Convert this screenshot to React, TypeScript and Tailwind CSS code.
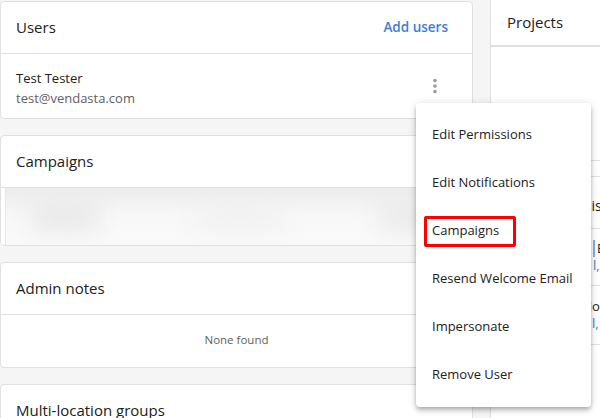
import { ReactNode } from "react";

const font = { fontFamily: '"Open Sans", "Noto Sans", Arial, sans-serif' };

function Card({ children, className = "" }: { children: ReactNode; className?: string }) {
  return (
    <div className={`shrink-0 bg-white border border-[#e0e0e0] rounded-[4px] overflow-hidden ${className}`}>
      {children}
    </div>
  );
}

function CardHeader({ title, action }: { title: string; action?: ReactNode }) {
  return (
    <div className="h-[52px] shrink-0 flex items-center justify-between pl-[15px] pr-6 border-b border-[#e0e0e0]">
      <span className="text-[15px] text-[#212121]">{title}</span>
      {action}
    </div>
  );
}

const menuItems = [
  "Edit Permissions",
  "Edit Notifications",
  "Campaigns",
  "Resend Welcome Email",
  "Impersonate",
  "Remove User",
];

export default function App() {
  return (
    <div style={font} className="relative w-[600px] h-[418px] overflow-hidden bg-[#f5f5f5] flex">
      {/* left column */}
      <div className="w-[473px] shrink-0 flex flex-col gap-4 pt-px">
        <Card>
          <CardHeader
            title="Users"
            action={<button className="text-[13.5px] font-semibold text-[#3b7dd8]">Add users</button>}
          />
          <div className="h-[64px] flex items-center justify-between pl-[15px] pr-[26px]">
            <div className="flex flex-col leading-[20px] pt-[3px]">
              <span className="text-[13px] text-[#212121]">Test Tester</span>
              <span className="text-[13px] text-[#616161]">test@vendasta.com</span>
            </div>
            <svg width="22" height="22" viewBox="0 0 24 24" fill="#9e9e9e">
              <path d="M12 8c1.1 0 2-.9 2-2s-.9-2-2-2-2 .9-2 2 .9 2 2 2zm0 2c-1.1 0-2 .9-2 2s.9 2 2 2 2-.9 2-2-.9-2-2-2zm0 6c-1.1 0-2 .9-2 2s.9 2 2 2 2-.9 2-2-.9-2-2-2z" />
            </svg>
          </div>
        </Card>

        <Card>
          <CardHeader title="Campaigns" />
          <div className="h-[57px] flex">
            <div className="w-[5px] bg-white border-r border-[#e6e6e6]" />
            <div className="flex-1 bg-gradient-to-b from-[#ececec] via-[#f8f8f8] to-[#fafafa] flex items-center justify-between px-6 overflow-hidden">
              <div className="w-[70px] h-[26px] rounded-full bg-[#e6e6e6] blur-md" />
              <div className="w-[90px] h-[26px] rounded-full bg-[#f0f0f0] blur-md" />
              <div className="w-[70px] h-[26px] rounded-full bg-[#e8e8e8] blur-md" />
            </div>
          </div>
        </Card>

        <Card>
          <CardHeader title="Admin notes" />
          <div className="h-[52px] flex items-center justify-center pb-[3px]">
            <span className="text-[11.5px] text-[#616161]">None found</span>
          </div>
        </Card>

        <Card>
          <CardHeader title="Multi-location groups" />
        </Card>
      </div>

      {/* right column */}
      <div className="ml-[17px] flex-1 bg-white border-l border-[#e0e0e0] flex flex-col whitespace-nowrap">
        <div className="h-[47px] shrink-0 flex items-center px-4 border-b-2 border-[#e0e0e0]">
          <span className="text-[15px] text-[#212121]">Projects</span>
        </div>
        <div className="h-[114px] shrink-0 border-b border-[#e0e0e0]" />
        <div className="h-[16px] shrink-0 border-b border-[#e0e0e0]" />
        <div className="h-[52px] shrink-0 border-b border-[#e0e0e0] flex items-center pt-[6px] pl-[58px] text-[14px] text-[#212121]">
          Analysis
        </div>
        <div className="h-[57px] shrink-0 border-b border-[#e0e0e0] flex flex-col justify-center pl-[102px] leading-[17px]">
          <span className="text-[13px] text-[#212121] border-l-2 border-[#7fb0e8] pl-[2px]">E</span>
          <span className="text-[13px] text-[#3b7dd8]">l,</span>
        </div>
        <div className="h-[59px] shrink-0 border-b border-[#e0e0e0] flex flex-col justify-center pl-[70px] leading-[17px]">
          <span className="text-[13px] text-[#212121]">Vendor</span>
          <span className="text-[13px] text-[#3b7dd8] pl-[31px]">l,</span>
        </div>
      </div>

      {/* context menu */}
      <div className="absolute left-[416px] top-[103px] w-[175px] bg-white rounded-[4px] py-2 shadow-[0_2px_4px_-1px_rgba(0,0,0,0.2),0_4px_5px_0_rgba(0,0,0,0.14),0_1px_10px_0_rgba(0,0,0,0.12)]">
        {menuItems.map((item) => (
          <div key={item} className="relative h-12 flex items-center px-4 text-[13px] text-[#212121] whitespace-nowrap">
            {item}
            {item === "Campaigns" && (
              <div className="absolute left-2 top-[9px] w-[92px] h-[31px] border-[3px] border-[#ff0000] rounded-[2px]" />
            )}
          </div>
        ))}
      </div>
    </div>
  );
}
